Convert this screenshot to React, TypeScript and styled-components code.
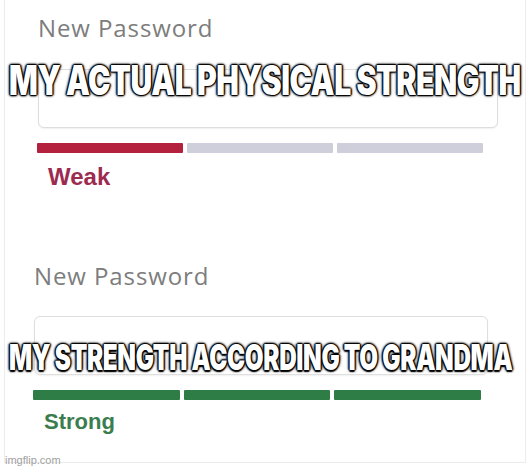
import React, { useLayoutEffect, useRef, useState } from 'react';
import styled, { createGlobalStyle } from 'styled-components';

const GlobalStyle = createGlobalStyle`
    html, body {
        margin: 0;
        padding: 0;
        background: #ffffff;
    }
    body {
        width: 532px;
        height: 469px;
        overflow: hidden;
        font-family: "Open Sans", "Liberation Sans", sans-serif;
    }
`;

const Frame = styled.div`
    position: relative;
    box-sizing: border-box;
    margin-left: 4px;
    width: 522px;
    height: 463px;
    border-left: 1px solid #ececec;
    border-right: 1px solid #ececec;
    border-bottom: 1px solid #ececec;
    background: #ffffff;
    display: flex;
    flex-direction: column;
`;

const Section = styled.div<{ $left: number; $top: number }>`
    display: flex;
    flex-direction: column;
    padding-left: ${p => p.$left}px;
    margin-top: ${p => p.$top}px;
`;

const Label = styled.div`
    font-size: 24px;
    line-height: 30px;
    height: 30px;
    color: #7d7d7d;
    letter-spacing: 0.9px;
`;

const InputBox = styled.div<{ $width: number; $top: number }>`
    box-sizing: border-box;
    width: ${p => p.$width}px;
    height: 59px;
    margin-top: ${p => p.$top}px;
    border: 1.5px solid #dedede;
    border-radius: 6px;
    box-shadow: 0 1px 2px rgba(0, 0, 0, 0.06);
    background: #fff;
`;

const Bars = styled.div<{ $width: number }>`
    display: flex;
    gap: 4px;
    width: ${p => p.$width}px;
    margin-top: 15px;
    margin-left: -1px;
`;

const Bar = styled.div<{ $color: string }>`
    flex: 1;
    height: 10px;
    background: ${p => p.$color};
    border-radius: 1px;
`;

const Strength = styled.div<{ $color: string; $size: number; $top: number }>`
    margin-top: ${p => p.$top}px;
    margin-left: 10px;
    font-family: "Liberation Sans", Arial, sans-serif;
    font-weight: 700;
    font-size: ${p => p.$size}px;
    line-height: 28px;
    color: ${p => p.$color};
`;

// meme caption: font size fits the width, then stretched up to full height
const CaptionSlot = styled.div<{ $top: number; $left: number }>`
    position: absolute;
    top: ${p => p.$top}px;
    left: ${p => p.$left}px;
    white-space: nowrap;
`;

const CaptionText = styled.span`
    display: inline-block;
    transform-origin: left top;
    font-family: Inter, "Roboto", "DejaVu Sans", sans-serif;
    font-weight: 900;
    line-height: 1;
    color: #ffffff;
    letter-spacing: -0.013em;
    text-shadow:
        0 0 2px #000,
        0 0 2px #000,
        0 0 3px #000,
        1px 0 1px #000,
        -1px 0 1px #000,
        0 1px 1px #000,
        0 -1px 1px #000;
`;

const Watermark = styled.div`
    position: absolute;
    left: 0;
    bottom: -4px;
    font-family: "Liberation Sans", Arial, sans-serif;
    font-size: 11px;
    line-height: 12px;
    color: #a0a0a0;
`;

interface CaptionProps {
    top: number;
    left: number;
    width: number;
    size: number;
    children: string;
}

const Caption = ({ top, left, width, size, children }: CaptionProps) => {
    const ref = useRef<HTMLSpanElement>(null);
    const [fontSize, setFontSize] = useState(size);

    useLayoutEffect(() => {
        if (ref.current) {
            const natural = ref.current.offsetWidth * (size / fontSize);
            setFontSize(size * width / natural);
        }
    }, [width, size, children]);

    const stretch = (size * 1.04) / fontSize;

    return (
        <CaptionSlot $top={top} $left={left}>
            <CaptionText ref={ref} style={{ fontSize, transform: `scaleY(${stretch})` }}>
                {children}
            </CaptionText>
        </CaptionSlot>
    );
};

const RED = '#b3213f';
const GREY = '#cfcfdb';
const GREEN = '#2f7d46';

export default function App() {
    return (
        <>
            <GlobalStyle />
            <Frame>
                <Section $left={33} $top={13}>
                    <Label>New Password</Label>
                    <InputBox $width={460} $top={26} />
                    <Bars $width={446}>
                        <Bar $color={RED} />
                        <Bar $color={GREY} />
                        <Bar $color={GREY} />
                    </Bars>
                    <Strength $color="#9c2b4f" $size={24} $top={10}>Weak</Strength>
                </Section>
                <Section $left={29} $top={70}>
                    <Label>New Password</Label>
                    <InputBox $width={454} $top={25} />
                    <Bars $width={448}>
                        <Bar $color={GREEN} />
                        <Bar $color={GREEN} />
                        <Bar $color={GREEN} />
                    </Bars>
                    <Strength $color="#3a7d4f" $size={22} $top={8}>Strong</Strength>
                </Section>
                <Caption top={60} left={4} width={512} size={39}>MY ACTUAL PHYSICAL STRENGTH</Caption>
                <Caption top={341} left={4} width={504} size={34}>MY STRENGTH ACCORDING TO GRANDMA</Caption>
                <Watermark>imgflip.com</Watermark>
            </Frame>
        </>
    );
}
